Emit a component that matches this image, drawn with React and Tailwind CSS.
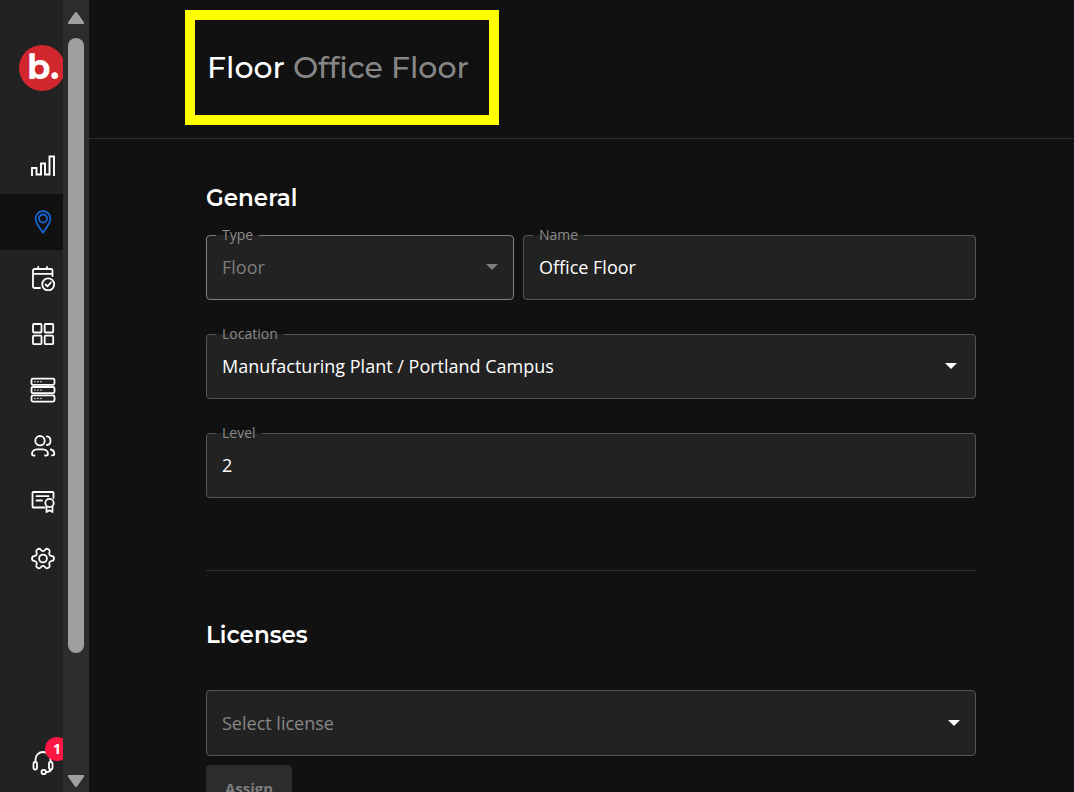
import { useState } from 'react';
import clsx from 'clsx';

// Sidebar icons, all drawn on the same 26px grid
function Icon({ children, className }) {
  return (
    <svg
      viewBox="0 0 26 26"
      fill="none"
      stroke="currentColor"
      strokeWidth="1.8"
      strokeLinecap="round"
      strokeLinejoin="round"
      aria-hidden="true"
      className={clsx('size-[26px] shrink-0', className)}
    >
      {children}
    </svg>
  );
}

const NAV_ITEMS = [
  {
    label: 'Analytics',
    icon: (
      <path
        d="M2 22V15H6.500V21.500H11V10.500H15V21.500H19.500V3.500H24V22"
        strokeWidth="1.9"
        strokeLinejoin="miter"
        strokeLinecap="square"
      />
    ),
  },
  {
    label: 'Locations',
    icon: (
      <>
        <path d="M13 23.700C10.500 19.800 5.600 14.500 5.600 9.500A7.400 7.400 0 0 1 20.400 9.500C20.400 14.500 15.500 19.800 13 23.700Z" />
        <circle cx="13" cy="9.500" r="4" />
      </>
    ),
  },
  {
    label: 'Bookings',
    icon: (
      <>
        <path d="M10 23H4.500a1.500 1.500 0 0 1-1.500-1.500V5.500A1.500 1.500 0 0 1 4.500 4h16.500a1.500 1.500 0 0 1 1.500 1.500V11M3 8.800h19.500M8.200 1.800V4M17 1.800V4" />
        <circle cx="18.200" cy="19.300" r="6" />
        <path d="M15.600 19.500l1.900 1.800 3.400-3.800" />
      </>
    ),
  },
  {
    label: 'Spaces',
    icon: (
      <>
        <rect x="3" y="3" width="8.500" height="8.500" rx="1" />
        <rect x="14.700" y="3" width="8.500" height="8.500" rx="1" />
        <rect x="3" y="14.700" width="8.500" height="8.500" rx="1" />
        <rect x="14.700" y="14.700" width="8.500" height="8.500" rx="1" />
      </>
    ),
  },
  {
    label: 'Devices',
    icon: (
      <>
        <rect x="1.500" y="1.600" width="23" height="6.200" rx="1.500" />
        <rect x="1.500" y="10" width="23" height="6.200" rx="1.500" />
        <rect x="1.500" y="18.400" width="23" height="6.200" rx="1.500" />
        <path
          d="M5 4.700h.01M8 4.700h.01M11 4.700h.01M5 13.100h.01M8 13.100h.01M11 13.100h.01M5 21.500h.01M8 21.500h.01M11 21.500h.01"
          strokeWidth="1.5"
        />
      </>
    ),
  },
  {
    label: 'Users',
    icon: (
      <>
        <circle cx="10" cy="7.700" r="4.700" />
        <path d="M16.800 3.400c2.200.2 3.700 2 3.700 4.300s-1.500 4.100-3.700 4.300" />
        <path d="M4.500 22.500H3.500c-1 0-1.500-.5-1.500-1.500 0-2.700 2.200-4.700 5-4.700h6c2.800 0 5 2 5 4.700 0 1-.5 1.500-1.500 1.500h-1.500" />
        <path d="M20.800 16.500c2.100.5 3.500 2.200 3.500 4.300 0 1.100-.5 1.600-1.700 1.600h-.6" />
      </>
    ),
  },
  {
    label: 'Licenses',
    icon: (
      <>
        <path d="M14.500 18.500H3.500a1 1 0 0 1-1-1V4a1 1 0 0 1 1-1h19a1 1 0 0 1 1 1v5M6.500 7.200h12M6.500 11.500h5.500" />
        <circle cx="19.500" cy="14" r="4.200" />
        <path d="M16.500 17.500V23l3-1.700 3 1.700v-5.500" />
      </>
    ),
  },
  {
    label: 'Settings',
    icon: (
      <>
        <path d="M24 13.500Q24 15.600 22 15.900 20.200 16.200 19.500 17.300 18.900 18.400 19.600 20.100 20.200 21.800 18.500 22.800 16.500 23.900 15.400 22.500 14.300 20.900 13 20.900 11.700 20.900 10.600 22.500 9.500 23.900 7.500 22.800 5.800 21.800 6.400 20.100 7.100 18.400 6.500 17.300 5.800 16.200 4 15.900 2 15.600 2 13.500 2 11.400 4 11.100 5.800 10.800 6.500 9.700 7.100 8.600 6.400 6.900 5.800 5.200 7.500 4.200 9.500 3.100 10.600 4.500 11.700 6.100 13 6.100 14.300 6.100 15.400 4.500 16.500 3.100 18.500 4.200 20.200 5.200 19.600 6.900 18.900 8.600 19.500 9.700 20.200 10.800 22 11.100 24 11.400 24 13.500Z" />
        <circle cx="13" cy="13.500" r="3.900" />
      </>
    ),
  },
];

function Caret({ className }) {
  return (
    <svg
      viewBox="0 0 12 6"
      aria-hidden="true"
      className={clsx('pointer-events-none col-start-1 row-start-1 h-1.5 w-3 self-center justify-self-end', className)}
    >
      <path d="M0 0h12L6 6z" fill="currentColor" />
    </svg>
  );
}

// Outlined box whose label sits in a notch of the top border
function Field({ id, label, strong = false, children }) {
  return (
    <fieldset
      className={clsx(
        'min-w-0 rounded border bg-[#222222] pb-2.5',
        strong ? 'border-[#7d7d7d]' : 'border-[#555555]'
      )}
    >
      <legend className="ml-[9px] h-5 px-1.5 text-sm leading-5 text-[#8a8a8a]">
        <label htmlFor={id}>{label}</label>
      </legend>
      {children}
    </fieldset>
  );
}

const controlClass =
  'col-start-1 row-start-1 h-11 w-full appearance-none bg-transparent px-[15px] text-lg outline-none';

const headingClass =
  "font-['Montserrat','Inter',sans-serif] text-[23px] leading-8 font-semibold";

function Sidebar() {
  return (
    <aside className="flex w-[63px] shrink-0 flex-col overflow-hidden bg-[#222222] text-white">
      <a
        href="#home"
        className="mt-[45px] ml-[19px] flex size-[46px] shrink-0 items-center justify-center rounded-full bg-[#d3272f] pb-0.5 pl-0.5 font-['Montserrat','Lato',sans-serif] text-[34px] leading-none font-bold"
      >
        b.
      </a>

      <nav className="mt-[47px]">
        {NAV_ITEMS.map(({ label, icon }) => (
          <a
            key={label}
            href={`#${label.toLowerCase()}`}
            aria-label={label}
            className={clsx(
              'flex h-14 items-center pl-[30px]',
              label === 'Locations' && 'bg-[#111111] text-[#1565d8]'
            )}
          >
            <Icon>{icon}</Icon>
          </a>
        ))}
      </nav>

      <button type="button" aria-label="Support" className="relative mt-auto mb-4 ml-[30px] w-[26px]">
        <Icon>
          <path d="M5.500 12V9.500a7.500 7.500 0 0 1 15 0V12" />
          <rect x="3.500" y="12" width="3.500" height="7.500" rx="1.500" />
          <rect x="19" y="12" width="3.500" height="7.500" rx="1.500" />
          <path d="M21 19.500c-.5 2-2.500 2.500-5 2.500" />
          <circle cx="13.700" cy="22" r="2.200" />
        </Icon>
        <span className="absolute -top-[13px] left-[15px] flex size-6 items-center justify-center rounded-full bg-[#ff1744] text-sm font-bold">
          1
        </span>
      </button>
    </aside>
  );
}

function ScrollBar() {
  return (
    <div aria-hidden="true" className="flex w-[26px] shrink-0 flex-col items-center bg-[#2c2c2c] pt-3 pb-[5px] text-[#9f9f9f]">
      <svg viewBox="0 0 16 12" className="h-3 w-4 shrink-0">
        <path d="M6.500 1Q8-1 9.500 1L16 10.500V12H0v-1.500z" fill="currentColor" />
      </svg>
      <div className="my-3.5 min-h-0 w-4 flex-1">
        <div className="h-[85%] rounded-full bg-[#9f9f9f]" />
      </div>
      <svg viewBox="0 0 16 12" className="h-3 w-4 shrink-0">
        <path d="M6.500 11Q8 13 9.500 11L16 1.500V0H0v1.500z" fill="currentColor" />
      </svg>
    </div>
  );
}

export default function App() {
  const [name, setName] = useState('Office Floor');
  const [level, setLevel] = useState('2');

  return (
    <div className="flex h-screen overflow-hidden bg-[#111111] font-['Open_Sans','Noto_Sans',sans-serif] text-white">
      <Sidebar />
      <ScrollBar />

      <main className="min-w-0 flex-1 overflow-hidden">
        <header className="border-b border-[#2e2e2e] pt-2.5 pb-[13px] pl-24">
          <div className="flex h-[115px] w-[314px] items-center border-10 border-[#ffff00] pl-3">
            <h1 className="font-['Montserrat','Inter',sans-serif] text-3xl leading-10 font-medium whitespace-nowrap">
              Floor <span className="text-[#868686]">Office Floor</span>
            </h1>
          </div>
        </header>

        <div className="pt-[43px] pr-[98px] pl-[117px]">
          <section className="border-b border-[#2e2e2e] pb-[72px]">
            <h2 className={headingClass}>General</h2>

            <div className="mt-[11px] flex flex-col gap-6">
              <div className="grid grid-cols-[308px_minmax(0,1fr)] gap-[9px]">
                <Field id="type" label="Type" strong>
                  <div className="grid text-[#7d7d7d]">
                    <select id="type" disabled className={clsx(controlClass, 'opacity-100')}>
                      <option>Floor</option>
                    </select>
                    <Caret className="mr-[15px]" />
                  </div>
                </Field>
                <Field id="name" label="Name">
                  <input
                    id="name"
                    type="text"
                    value={name}
                    onChange={(e) => setName(e.target.value)}
                    className={controlClass}
                  />
                </Field>
              </div>

              <Field id="location" label="Location">
                <div className="grid">
                  <select id="location" className={controlClass}>
                    <option>Manufacturing Plant / Portland Campus</option>
                  </select>
                  <Caret className="mr-[18px]" />
                </div>
              </Field>

              <Field id="level" label="Level">
                <input
                  id="level"
                  type="text"
                  value={level}
                  onChange={(e) => setLevel(e.target.value)}
                  className={controlClass}
                />
              </Field>
            </div>
          </section>

          <section className="pt-12">
            <h2 className={headingClass}>Licenses</h2>

            <div className="mt-[39px] grid h-[66px] items-center rounded border border-[#555555] bg-[#222222]">
              <select aria-label="Select license" className={clsx(controlClass, 'text-[#868686]')}>
                <option>Select license</option>
              </select>
              <Caret className="mr-[15px]" />
            </div>

            <button
              type="button"
              disabled
              className="mt-[9px] h-[46px] w-[86px] rounded bg-[#2c2c2c] text-[15px] font-bold text-[#7d7d7d]"
            >
              Assign
            </button>
          </section>
        </div>
      </main>
    </div>
  );
}
